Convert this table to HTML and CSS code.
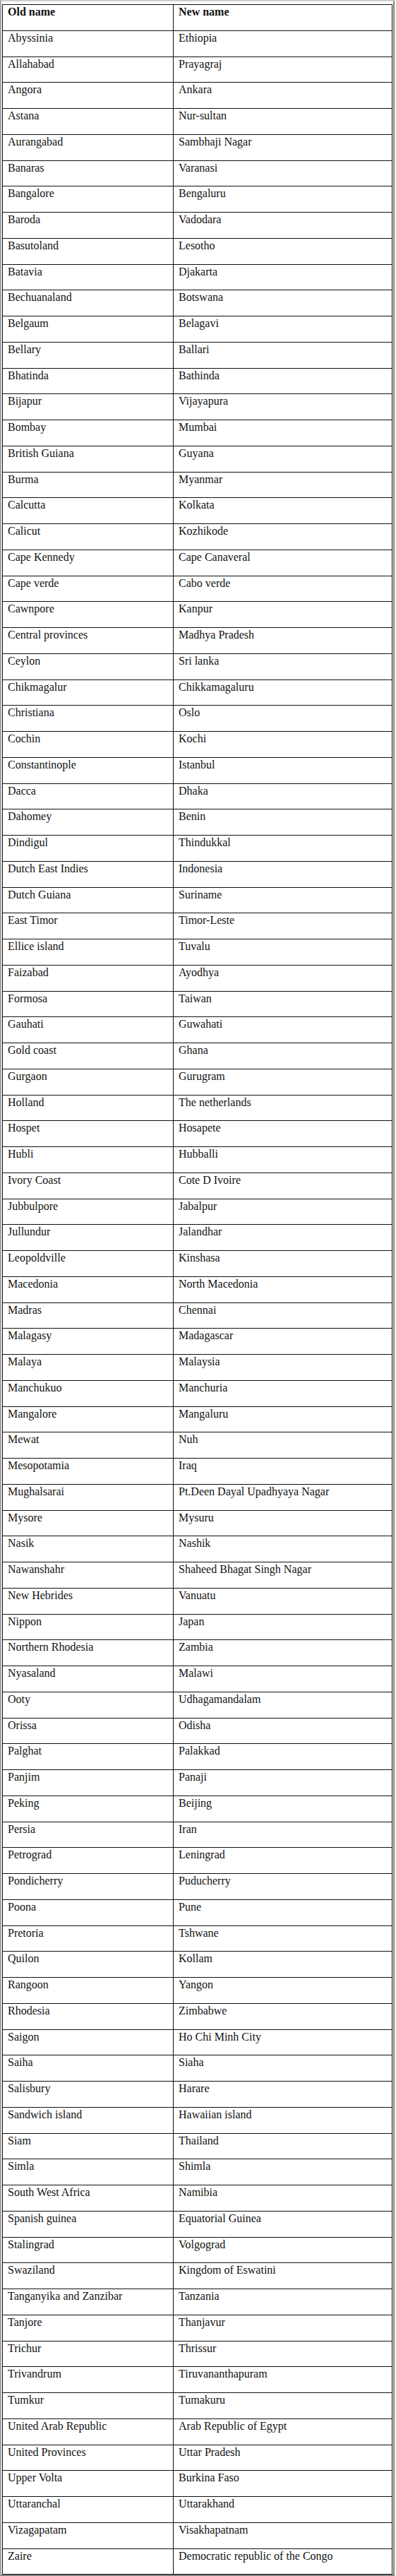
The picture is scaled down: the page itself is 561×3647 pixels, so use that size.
FILE: index.html
```html
<!DOCTYPE html>
<html lang="en">
<head>
<meta charset="utf-8">
<title>Old and new names</title>
<link rel="stylesheet" href="styles.css">
</head>
<body>
<div class="frame">
<table class="names">
<colgroup><col class="col-old"><col class="col-new"></colgroup>
<thead>
<tr><th>Old name</th><th>New name</th></tr>
</thead>
<tbody>
<tr><td>Abyssinia</td><td>Ethiopia</td></tr>
<tr><td>Allahabad</td><td>Prayagraj</td></tr>
<tr><td>Angora</td><td>Ankara</td></tr>
<tr><td>Astana</td><td>Nur-sultan</td></tr>
<tr><td>Aurangabad</td><td>Sambhaji Nagar</td></tr>
<tr><td>Banaras</td><td>Varanasi</td></tr>
<tr><td>Bangalore</td><td>Bengaluru</td></tr>
<tr><td>Baroda</td><td>Vadodara</td></tr>
<tr><td>Basutoland</td><td>Lesotho</td></tr>
<tr><td>Batavia</td><td>Djakarta</td></tr>
<tr><td>Bechuanaland</td><td>Botswana</td></tr>
<tr><td>Belgaum</td><td>Belagavi</td></tr>
<tr><td>Bellary</td><td>Ballari</td></tr>
<tr><td>Bhatinda</td><td>Bathinda</td></tr>
<tr><td>Bijapur</td><td>Vijayapura</td></tr>
<tr><td>Bombay</td><td>Mumbai</td></tr>
<tr><td>British Guiana</td><td>Guyana</td></tr>
<tr><td>Burma</td><td>Myanmar</td></tr>
<tr><td>Calcutta</td><td>Kolkata</td></tr>
<tr><td>Calicut</td><td>Kozhikode</td></tr>
<tr><td>Cape Kennedy</td><td>Cape Canaveral</td></tr>
<tr><td>Cape verde</td><td>Cabo verde</td></tr>
<tr><td>Cawnpore</td><td>Kanpur</td></tr>
<tr><td>Central provinces</td><td>Madhya Pradesh</td></tr>
<tr><td>Ceylon</td><td>Sri lanka</td></tr>
<tr><td>Chikmagalur</td><td>Chikkamagaluru</td></tr>
<tr><td>Christiana</td><td>Oslo</td></tr>
<tr><td>Cochin</td><td>Kochi</td></tr>
<tr><td>Constantinople</td><td>Istanbul</td></tr>
<tr><td>Dacca</td><td>Dhaka</td></tr>
<tr><td>Dahomey</td><td>Benin</td></tr>
<tr><td>Dindigul</td><td>Thindukkal</td></tr>
<tr><td>Dutch East Indies</td><td>Indonesia</td></tr>
<tr><td>Dutch Guiana</td><td>Suriname</td></tr>
<tr><td>East Timor</td><td>Timor-Leste</td></tr>
<tr><td>Ellice island</td><td>Tuvalu</td></tr>
<tr><td>Faizabad</td><td>Ayodhya</td></tr>
<tr><td>Formosa</td><td>Taiwan</td></tr>
<tr><td>Gauhati</td><td>Guwahati</td></tr>
<tr><td>Gold coast</td><td>Ghana</td></tr>
<tr><td>Gurgaon</td><td>Gurugram</td></tr>
<tr><td>Holland</td><td>The netherlands</td></tr>
<tr><td>Hospet</td><td>Hosapete</td></tr>
<tr><td>Hubli</td><td>Hubballi</td></tr>
<tr><td>Ivory Coast</td><td>Cote D Ivoire</td></tr>
<tr><td>Jubbulpore</td><td>Jabalpur</td></tr>
<tr><td>Jullundur</td><td>Jalandhar</td></tr>
<tr><td>Leopoldville</td><td>Kinshasa</td></tr>
<tr><td>Macedonia</td><td>North Macedonia</td></tr>
<tr><td>Madras</td><td>Chennai</td></tr>
<tr><td>Malagasy</td><td>Madagascar</td></tr>
<tr><td>Malaya</td><td>Malaysia</td></tr>
<tr><td>Manchukuo</td><td>Manchuria</td></tr>
<tr><td>Mangalore</td><td>Mangaluru</td></tr>
<tr><td>Mewat</td><td>Nuh</td></tr>
<tr><td>Mesopotamia</td><td>Iraq</td></tr>
<tr><td>Mughalsarai</td><td>Pt.Deen Dayal Upadhyaya Nagar</td></tr>
<tr><td>Mysore</td><td>Mysuru</td></tr>
<tr><td>Nasik</td><td>Nashik</td></tr>
<tr><td>Nawanshahr</td><td>Shaheed Bhagat Singh Nagar</td></tr>
<tr><td>New Hebrides</td><td>Vanuatu</td></tr>
<tr><td>Nippon</td><td>Japan</td></tr>
<tr><td>Northern Rhodesia</td><td>Zambia</td></tr>
<tr><td>Nyasaland</td><td>Malawi</td></tr>
<tr><td>Ooty</td><td>Udhagamandalam</td></tr>
<tr><td>Orissa</td><td>Odisha</td></tr>
<tr><td>Palghat</td><td>Palakkad</td></tr>
<tr><td>Panjim</td><td>Panaji</td></tr>
<tr><td>Peking</td><td>Beijing</td></tr>
<tr><td>Persia</td><td>Iran</td></tr>
<tr><td>Petrograd</td><td>Leningrad</td></tr>
<tr><td>Pondicherry</td><td>Puducherry</td></tr>
<tr><td>Poona</td><td>Pune</td></tr>
<tr><td>Pretoria</td><td>Tshwane</td></tr>
<tr><td>Quilon</td><td>Kollam</td></tr>
<tr><td>Rangoon</td><td>Yangon</td></tr>
<tr><td>Rhodesia</td><td>Zimbabwe</td></tr>
<tr><td>Saigon</td><td>Ho Chi Minh City</td></tr>
<tr><td>Saiha</td><td>Siaha</td></tr>
<tr><td>Salisbury</td><td>Harare</td></tr>
<tr><td>Sandwich island</td><td>Hawaiian island</td></tr>
<tr><td>Siam</td><td>Thailand</td></tr>
<tr><td>Simla</td><td>Shimla</td></tr>
<tr><td>South West Africa</td><td>Namibia</td></tr>
<tr><td>Spanish guinea</td><td>Equatorial Guinea</td></tr>
<tr><td>Stalingrad</td><td>Volgograd</td></tr>
<tr><td>Swaziland</td><td>Kingdom of Eswatini</td></tr>
<tr><td>Tanganyika and Zanzibar</td><td>Tanzania</td></tr>
<tr><td>Tanjore</td><td>Thanjavur</td></tr>
<tr><td>Trichur</td><td>Thrissur</td></tr>
<tr><td>Trivandrum</td><td>Tiruvananthapuram</td></tr>
<tr><td>Tumkur</td><td>Tumakuru</td></tr>
<tr><td>United Arab Republic</td><td>Arab Republic of Egypt</td></tr>
<tr><td>United Provinces</td><td>Uttar Pradesh</td></tr>
<tr><td>Upper Volta</td><td>Burkina Faso</td></tr>
<tr><td>Uttaranchal</td><td>Uttarakhand</td></tr>
<tr><td>Vizagapatam</td><td>Visakhapatnam</td></tr>
<tr><td>Zaire</td><td>Democratic republic of the Congo</td></tr>
</tbody>
</table>
</div>
</body>
</html>
```

FILE: styles.css
```css
html, body {
  margin: 0;
  padding: 0;
  background: #ffffff;
}

.frame {
  box-sizing: border-box;
  width: 559px;
  height: 3647px;
  border-style: solid;
  border-width: 2px;
  border-color: #cfcfcf #7f7f7f #7f7f7f #a8a8a8;
  padding-top: 4px;
}

.names {
  margin-left: 1px;
  width: 553px;
  height: 3639px;
  border-collapse: collapse;
  table-layout: fixed;
  font-family: "Liberation Serif", "Times New Roman", serif;
  font-size: 16px;
  color: #111111;
  border: 1px solid #111111;
}

.names tr {
  height: 36.75px;
}

.col-old {
  width: 242px;
}

.names th,
.names td {
  border: 1px solid #111111;
  padding: 1px 6px 0 7px;
  vertical-align: top;
  text-align: left;
  line-height: 18px;
}

.names th {
  font-weight: bold;
}
```
